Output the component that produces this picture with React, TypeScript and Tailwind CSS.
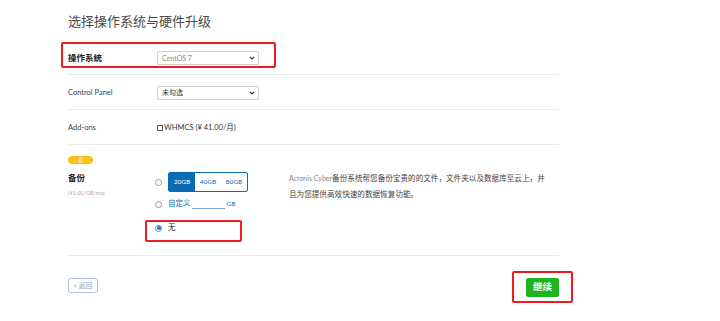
import React from "react";

const font = { fontFamily: 'Lato, "Noto Sans CJK SC", sans-serif' };

function Chevron() {
  return (
    <svg width="6" height="4" viewBox="0 0 6 4" className="shrink-0">
      <path d="M0.8 0.8 L3 3 L5.2 0.8" fill="none" stroke="#333" strokeWidth="1.1" />
    </svg>
  );
}

function Select({ text, muted }: { text: string; muted?: boolean }) {
  return (
    <div className="w-[102px] h-[14px] border border-[#cfcfcf] rounded-[2px] bg-white flex items-center justify-between pl-[4px] pr-[3px]">
      <span className={`text-[7px] leading-none ${muted ? "text-[#8a8a8a]" : "text-[#333]"}`}>{text}</span>
      <Chevron />
    </div>
  );
}

function Radio({ checked }: { checked?: boolean }) {
  return checked ? (
    <span className="w-[7px] h-[7px] rounded-full border border-[#4a90e2] bg-white flex items-center justify-center shrink-0">
      <span className="w-[4px] h-[4px] rounded-full bg-[#1a73e8]" />
    </span>
  ) : (
    <span className="w-[7px] h-[7px] rounded-full border border-[#9a9a9a] bg-white shrink-0" />
  );
}

export default function App() {
  return (
    <div className="w-[720px] h-[321px] bg-white overflow-hidden" style={font}>
      <div className="pl-[68px] w-[559px]">
        {/* Title */}
        <div className="h-[41px] pt-[13px]">
          <div className="text-[13px] leading-[16px] text-[#4a4a4a]">选择操作系统与硬件升级</div>
        </div>

        {/* Row 1 */}
        <div className="relative h-[34px] border-b border-[#ececec] flex items-center pt-[1px]">
          <div className="w-[89px] text-[8.5px] font-bold text-[#222]">操作系统</div>
          <Select text="CentOS 7" muted />
          <div className="absolute left-[-7px] top-[1px] w-[215px] h-[26px] border-2 border-[#ee1c1c] rounded-[2px] pointer-events-none" />
        </div>

        {/* Row 2 */}
        <div className="h-[35px] border-b border-[#ececec] flex items-center pt-[1px]">
          <div className="w-[89px] text-[7.5px] text-[#444]">Control Panel</div>
          <Select text="未勾选" />
        </div>

        {/* Row 3 */}
        <div className="h-[35px] border-b border-[#ececec] flex items-center pt-[1px]">
          <div className="w-[89px] text-[7.5px] text-[#444]">Add-ons</div>
          <div className="flex items-center text-[7.5px] text-[#333]">
            <span className="w-[6px] h-[6px] border border-[#555] mr-[1px]" />
            <span>WHMCS (¥ 41.00/月)</span>
          </div>
        </div>

        {/* Row 4 backup */}
        <div className="h-[111px] border-b border-[#ececec] flex">
          <div className="w-[89px] pt-[11px] flex flex-col">
            <div className="w-[25px] h-[8px] rounded-full bg-[#f8c21c] flex items-center justify-center text-[5px] leading-none text-white">荐</div>
            <div className="mt-[9px] text-[8.5px] leading-[11px] font-bold text-[#222]">备份</div>
            <div className="mt-[5px] text-[5.5px] leading-[8px] text-[#aaa]">(¥1.00/GB/mo)</div>
          </div>
          <div className="w-[132px] pt-[27px] flex flex-col">
            <div className="flex items-center h-[20px] ml-[-2px]">
              <Radio />
              <div className="ml-[6px] flex h-[20px] border border-[#0b6bb5] rounded-[2px] overflow-hidden text-[6.5px]">
                <span className="w-[26px] bg-[#0b6bb5] text-white flex items-center justify-center">20GB</span>
                <span className="w-[26px] text-[#0b6bb5] flex items-center justify-center">40GB</span>
                <span className="w-[26px] text-[#0b6bb5] flex items-center justify-center">80GB</span>
              </div>
            </div>
            <div className="flex items-center h-[14px] mt-[5px] ml-[-2px]">
              <Radio />
              <span className="ml-[6px] text-[7.5px] text-[#0b6bb5]">自定义</span>
              <span className="ml-[1px] w-[33px] h-[10px] border-b border-[#7aa7cf]" />
              <span className="ml-[2px] text-[6.5px] text-[#0b6bb5]">GB</span>
            </div>
            <div className="relative flex items-center h-[14px] mt-[10px] ml-[-2px]">
              <Radio checked />
              <span className="ml-[6px] text-[7.5px] text-[#222]">无</span>
              <div className="absolute left-[-10px] top-[-1px] w-[97px] h-[22px] border-2 border-[#ee1c1c] rounded-[2px] pointer-events-none" />
            </div>
          </div>
          <div className="w-[264px] pt-[25px] text-[7.6px] leading-[16px] text-[#444]">
            <span className="text-[7px] leading-[16px] text-[#888]">Acronis Cyber</span>备份系统帮您备份宝贵的的文件，文件夹以及数据库至云上，并<br />且为您提供高效快速的数据恢复功能。
          </div>
        </div>

        {/* Footer */}
        <div className="flex justify-between items-start pt-[22px]">
          <div className="w-[30px] h-[15px] border border-[#a9c3e3] rounded-[3px] flex items-center justify-center text-[7px] text-[#8fa9c9]">
            « 返回
          </div>
          <div className="relative">
            <div className="w-[33px] h-[19px] bg-[#1db41d] rounded-[2px] flex items-center justify-center text-[9.5px] font-bold text-white">继续</div>
            <div className="absolute left-[-14px] top-[-7px] w-[61px] h-[32px] border-2 border-[#ee1c1c] rounded-[2px] pointer-events-none" />
          </div>
        </div>
      </div>
    </div>
  );
}
